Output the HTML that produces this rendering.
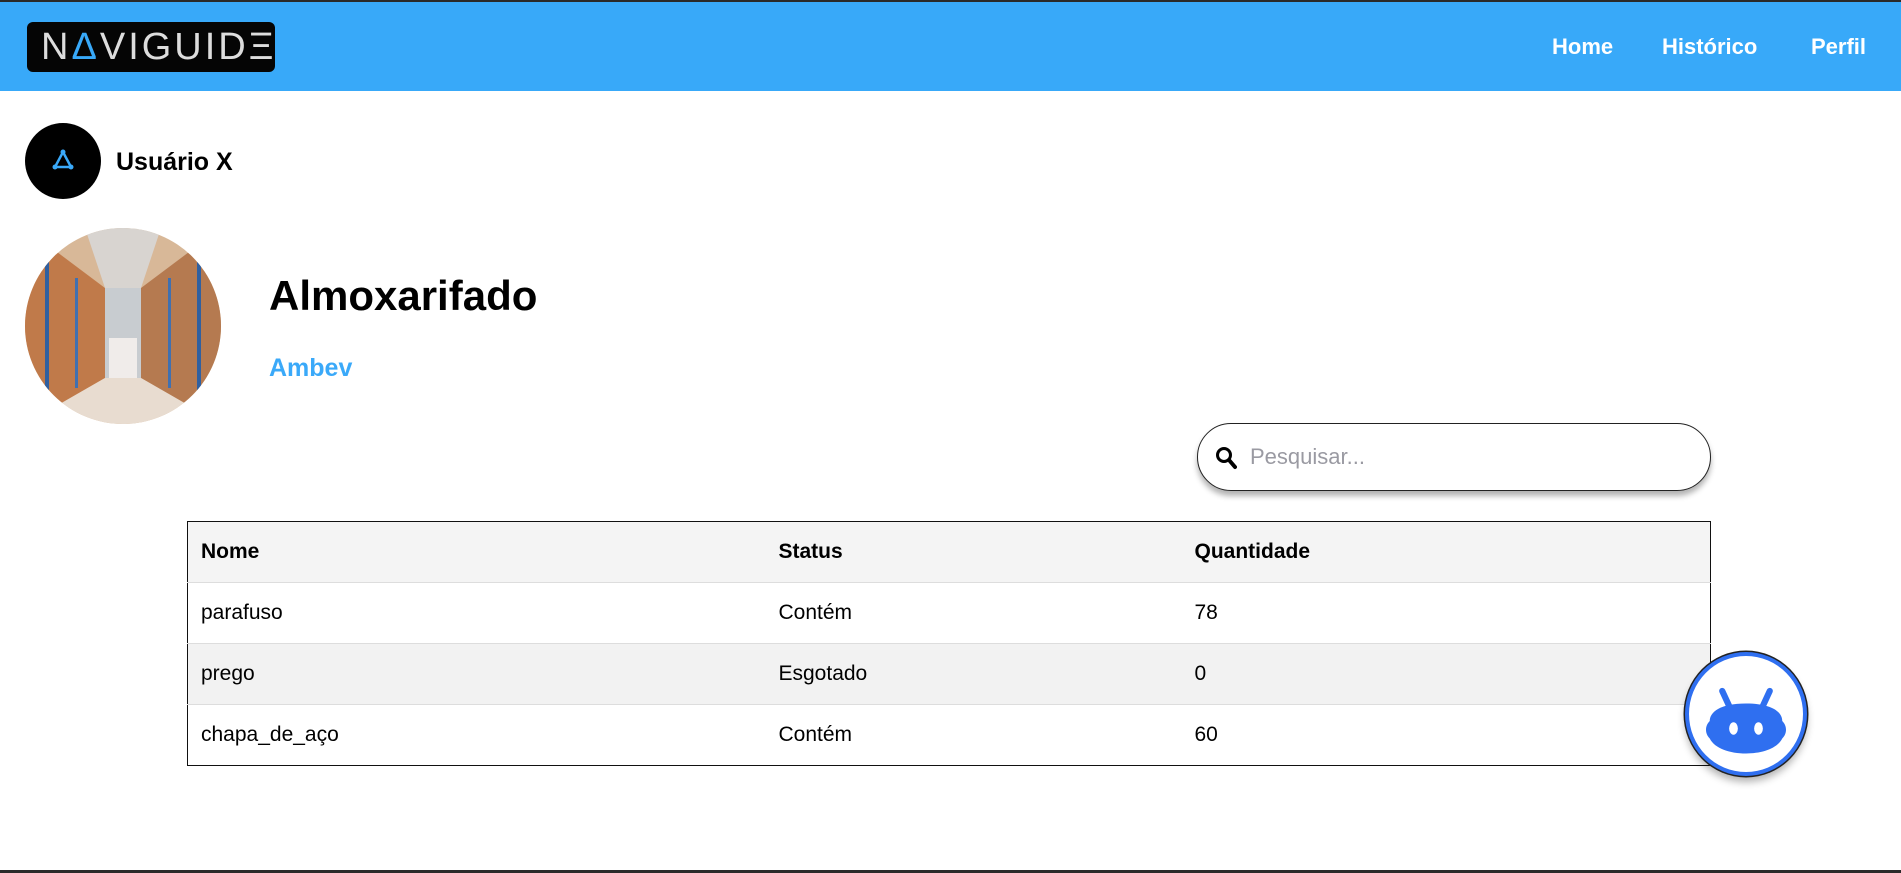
<!DOCTYPE html>
<html><head><meta charset="utf-8"><style>
*{margin:0;padding:0;box-sizing:border-box}
body{width:1901px;height:873px;position:relative;background:#fff;font-family:"Liberation Sans",Arial,sans-serif;overflow:hidden;border-top:2px solid #2a2a2a;border-bottom:3px solid #2a2a2a}
.hdr{position:absolute;left:0;top:0;width:1901px;height:89px;background:#38a9f9}
.logo{position:absolute;left:27px;top:20px;width:248px;height:50px;background:#050505;border-radius:6px;color:#ddd;font-size:38px;letter-spacing:3px;line-height:50px;padding-left:14px;font-weight:300}
.nav{position:absolute;top:32px;color:#fff;font-weight:bold;font-size:22px}
.av{position:absolute;left:25px;top:121px;width:76px;height:76px;border-radius:50%;background:#000}
.user{position:absolute;left:116px;top:146px;font-size:25px;font-weight:bold}
.wh{position:absolute;left:25px;top:226px;width:196px;height:196px;border-radius:50%;overflow:hidden}
.t1{position:absolute;left:269px;top:270px;font-size:42px;font-weight:bold}
.t2{position:absolute;left:269px;top:352px;font-size:25px;font-weight:bold;color:#3aa9f9}
.search{position:absolute;left:1197px;top:421px;width:514px;height:68px;border:1.5px solid #222;border-radius:34px;box-shadow:0 5px 6px rgba(0,0,0,.3);background:#fff}
.ph{position:absolute;left:52px;top:20px;font-size:22px;color:#9a9aa2}
table{position:absolute;left:187px;top:519px;width:1524px;border-collapse:collapse;border:1.5px solid #111;font-size:21px}
td,th{height:61px;text-align:left;padding-left:13px;border-bottom:1px solid #ddd}
th{background:#f4f4f4}
tr.g td{background:#f2f2f2}
.bot{position:absolute;left:1685px;top:650px;width:122px;height:124px;border-radius:50%;background:#fff;border:4px solid #2f6ff0;box-shadow:0 0 0 1.5px #222,0 6px 8px rgba(0,0,0,.3)}
</style></head><body>
<div class="hdr">
<div class="logo">N<span style="color:#38a9f9">Δ</span>VIGUIDΞ</div>
<div class="nav" style="left:1552px">Home</div>
<div class="nav" style="left:1662px">Histórico</div>
<div class="nav" style="left:1811px">Perfil</div>
</div>
<div class="av"><svg width="76" height="76"><path d="M38 29 L46 44 L30 44 Z" fill="none" stroke="#3aa9f9" stroke-width="2.5"/><circle cx="38" cy="29" r="2.5" fill="#3aa9f9"/><circle cx="30" cy="44" r="2.5" fill="#3aa9f9"/><circle cx="46" cy="44" r="2.5" fill="#3aa9f9"/></svg></div>
<div class="user">Usuário X</div>
<div class="wh"><svg width="196" height="196">
<rect width="196" height="196" fill="#d8b898"/>
<polygon points="0,0 80,60 80,150 0,196" fill="#c07a4a"/>
<polygon points="196,0 116,60 116,150 196,196" fill="#b57a50"/>
<polygon points="80,60 116,60 116,150 80,150" fill="#c8ccd0"/>
<polygon points="84,110 112,110 112,150 84,150" fill="#f0ecea"/>
<polygon points="0,196 80,150 116,150 196,196" fill="#e8dcd0"/>
<rect x="20" y="30" width="4" height="150" fill="#3060a0"/><rect x="172" y="30" width="4" height="150" fill="#3060a0"/>
<rect x="50" y="50" width="3" height="110" fill="#4070b0"/><rect x="143" y="50" width="3" height="110" fill="#4070b0"/>
<polygon points="60,0 136,0 116,60 80,60" fill="#d8d4d0"/>
</svg></div>
<div class="t1">Almoxarifado</div>
<div class="t2">Ambev</div>
<div class="search"><svg style="position:absolute;left:17px;top:22px" width="22" height="24"><circle cx="9" cy="9" r="6.5" fill="none" stroke="#000" stroke-width="3"/><path d="M14 14 L20 21" stroke="#000" stroke-width="4" stroke-linecap="round"/></svg><div class="ph">Pesquisar...</div></div>
<table>
<tr><th style="width:578px">Nome</th><th style="width:416px">Status</th><th>Quantidade</th></tr>
<tr><td>parafuso</td><td>Contém</td><td>78</td></tr>
<tr class="g"><td>prego</td><td>Esgotado</td><td>0</td></tr>
<tr><td style="border:0">chapa_de_aço</td><td style="border:0">Contém</td><td style="border:0">60</td></tr>
</table>
<div class="bot"><svg width="114" height="116" viewBox="0 0 114 116"><g transform="translate(57 60) scale(1.25) translate(-57 -60)"><path d="M38 40 L44 53 M76 40 L70 53" stroke="#2f6ff0" stroke-width="5" stroke-linecap="round"/><path d="M57 50 C78 50 86 57 86 64 C90 68 90 74 86 78 C82 86 70 90 57 90 C44 90 32 86 28 78 C24 74 24 68 28 64 C28 57 36 50 57 50 Z" fill="#2f6ff0"/><ellipse cx="47" cy="70" rx="3.5" ry="5" fill="#fff"/><ellipse cx="67" cy="70" rx="3.5" ry="5" fill="#fff"/></g></svg></div>
</body></html>
